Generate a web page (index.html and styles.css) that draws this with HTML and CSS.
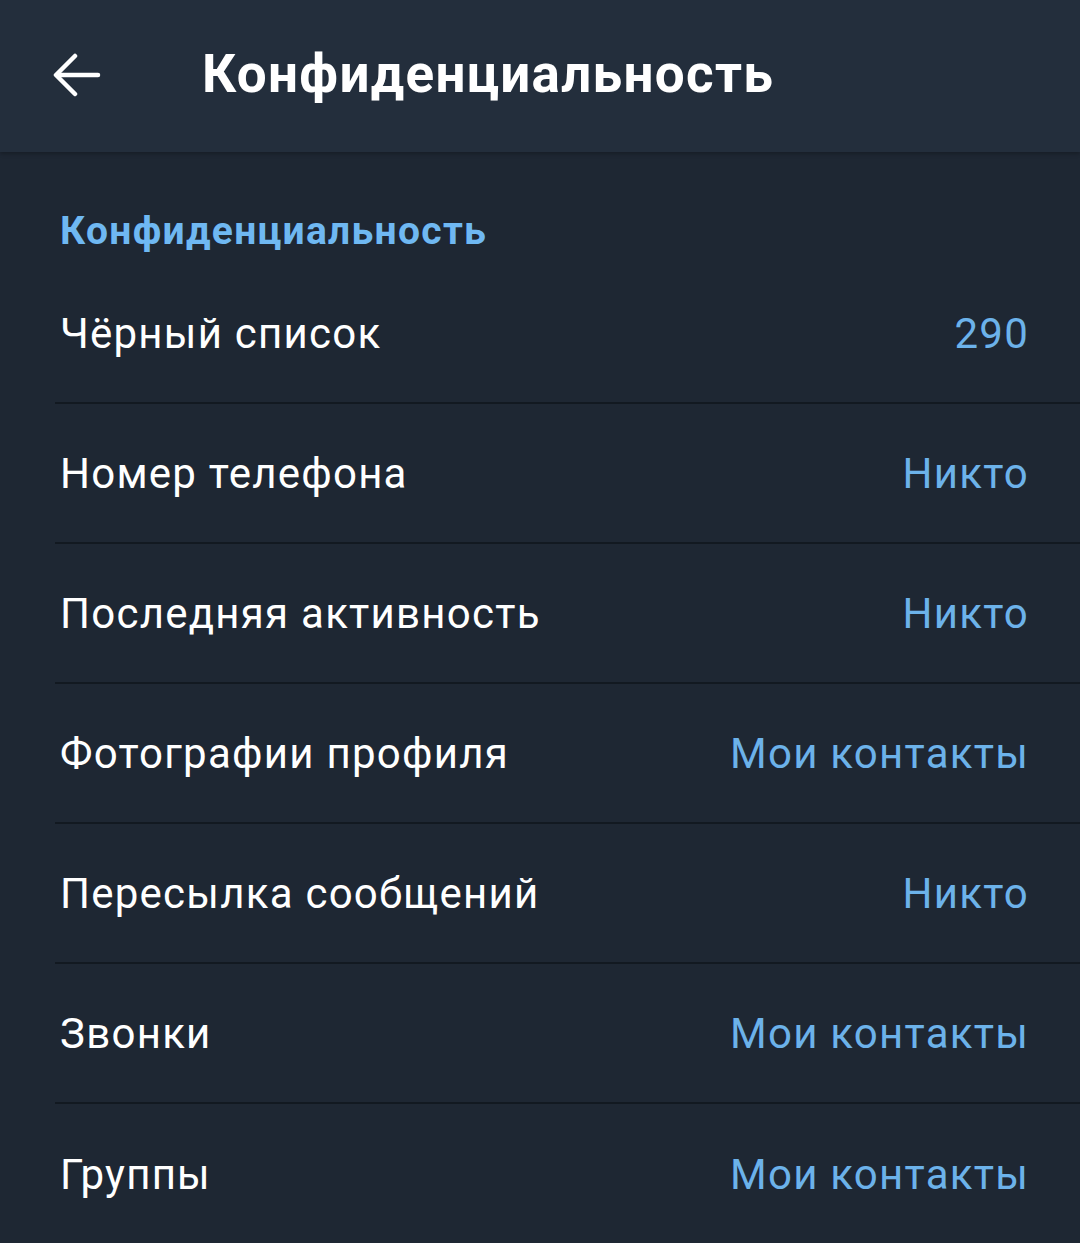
FILE: index.html
```html
<!DOCTYPE html>
<html lang="ru">
<head>
  <meta charset="UTF-8">
  <title>Конфиденциальность</title>
  <link rel="stylesheet" href="styles.css">
</head>
<body>

  <div class="topbar">
    <button class="back" aria-label="Назад">
      <svg width="48" height="48" viewBox="0 0 48 48" fill="none" stroke="#fff" stroke-width="4.5" stroke-linecap="round" stroke-linejoin="round">
        <path d="M45 23H4"/>
        <path d="M22 4L3 23l19 19"/>
      </svg>
    </button>
    <h1>Конфиденциальность</h1>
  </div>

  <div class="section">
    <h2>Конфиденциальность</h2>
    <div class="row"><span class="label">Чёрный список</span><span class="value">290</span></div>
    <div class="row"><span class="label">Номер телефона</span><span class="value">Никто</span></div>
    <div class="row"><span class="label">Последняя активность</span><span class="value">Никто</span></div>
    <div class="row"><span class="label">Фотографии профиля</span><span class="value">Мои контакты</span></div>
    <div class="row"><span class="label">Пересылка сообщений</span><span class="value">Никто</span></div>
    <div class="row"><span class="label">Звонки</span><span class="value">Мои контакты</span></div>
    <div class="row"><span class="label">Группы</span><span class="value">Мои контакты</span></div>
  </div>

</body>
</html>
```

FILE: styles.css
```css
body {
  margin: 0;
  background: #1e2733;
  font-family: Roboto, "Noto Sans", sans-serif;
  color: #fff;
  overflow: hidden;
}
.topbar {
  height: 152px;
  background: #232e3c;
  display: flex;
  align-items: center;
  box-shadow: 0 2px 4px rgba(0, 0, 0, 0.25);
  position: relative;
}
.back {
  background: none;
  border: none;
  padding: 0;
  margin-left: 53px;
  width: 48px;
  height: 48px;
  display: flex;
}
.topbar h1 {
  margin: 0 0 4px 101px;
  font-size: 53px;
  font-weight: 700;
  letter-spacing: 1.3px;
}
.section h2 {
  margin: 0;
  height: 112px;
  padding: 60px 60px 0;
  box-sizing: border-box;
  font-size: 39px;
  line-height: 1;
  font-weight: 700;
  letter-spacing: 1.3px;
  color: #6fb8f2;
}
.row {
  height: 140px;
  margin-left: 55px;
  padding: 0 51px 0 5px;
  display: flex;
  align-items: center;
  justify-content: space-between;
  border-bottom: 2px solid #121921;
  box-sizing: border-box;
  font-size: 42px;
  letter-spacing: 1.25px;
}
.row:last-child {
  border-bottom: none;
}
.value {
  color: #6cb2ea;
}
```
